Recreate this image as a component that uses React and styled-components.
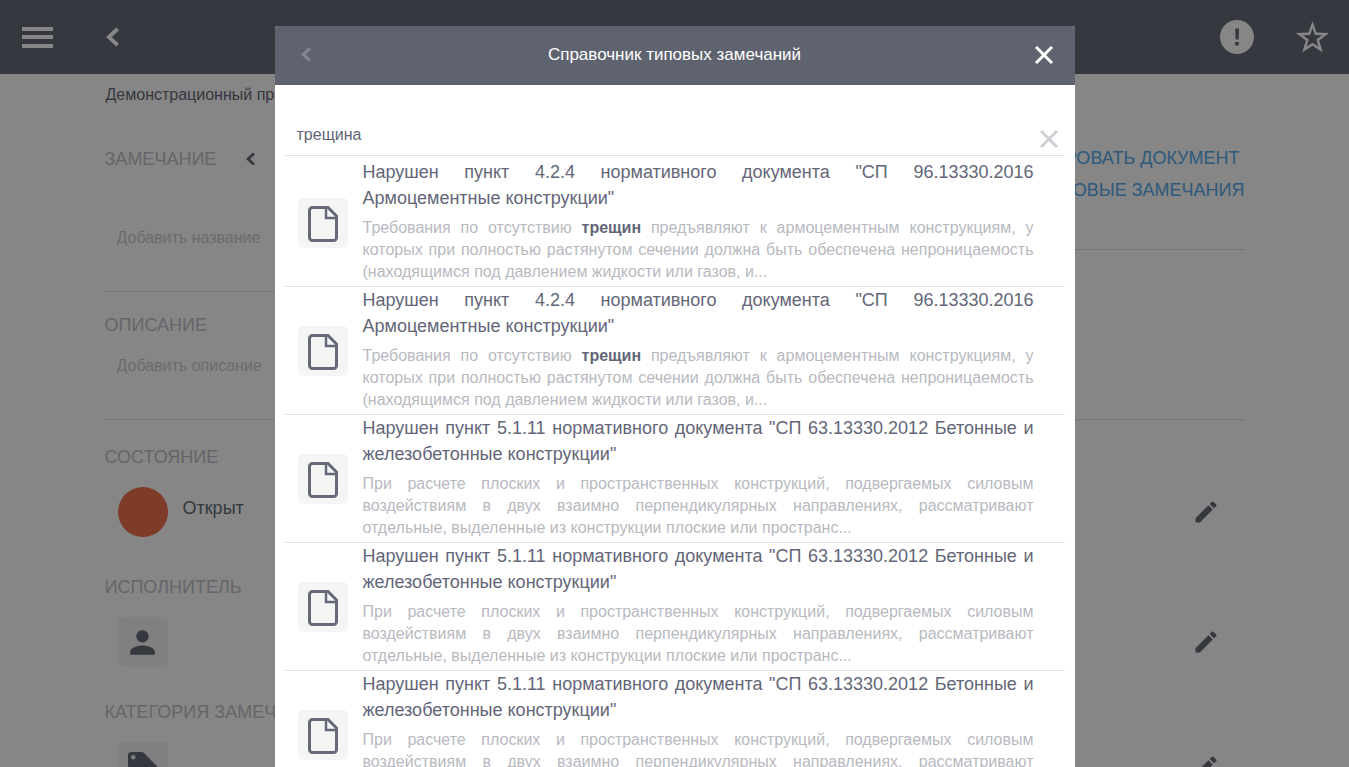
import React, { useState } from "react";
import styled, { createGlobalStyle } from "styled-components";
import { MdModeEdit, MdPerson, MdLocalOffer } from "react-icons/md";

const GlobalStyle = createGlobalStyle`
  *, *::before, *::after { box-sizing: border-box; }
  body {
    margin: 0;
    background: #f4f4f4;
    color: #616672;
    font-family: "Liberation Sans", Arial, sans-serif;
    font-size: 16px;
    line-height: 20px;
    overflow: hidden;
  }
  h1, h2, h3, p, ul { margin: 0; padding: 0; font-weight: 400; }
  button, input { font: inherit; color: inherit; border: 0; background: none; padding: 0; margin: 0; }
  button { cursor: pointer; }
  svg { display: block; }
`;

const Page = styled.div`
  height: 100vh;
  overflow: hidden;
`;

const AppBar = styled.header`
  display: flex;
  align-items: center;
  justify-content: space-between;
  height: 74px;
  padding: 0 18px;
  background: #616672;
  color: #f4f4f4;
`;

const BarGroup = styled.div`
  display: flex;
  align-items: center;
  gap: 37px;
`;

const IconButton = styled.button`
  display: grid;
  place-items: center;
  width: 38px;
  height: 38px;
  flex: none;
  &:disabled { color: #84878f; cursor: default; }
`;

const Container = styled.main`
  max-width: 1140px;
  margin: 0 auto;
  padding-top: 11px;
`;

const Breadcrumb = styled.p`
  padding-left: 1px;
  white-space: nowrap;
`;

const Columns = styled.div`
  display: grid;
  grid-template-columns: 1fr 1fr;
  align-items: start;
`;

const Panel = styled.section`
  border-bottom: 1px solid #d8d8d8;
  height: ${(p) => p.$height}px;
  padding-top: ${(p) => p.$top}px;
`;

const HeadingRow = styled.div`
  display: flex;
  align-items: center;
  gap: 24px;
`;

const Heading = styled.h2`
  font-size: 18px;
  line-height: 20px;
  color: #b8bac0;
  text-transform: uppercase;
`;

const SmallButton = styled.button`
  display: grid;
  place-items: center;
  width: ${(p) => p.$size}px;
  height: ${(p) => p.$size}px;
  flex: none;
`;

const Field = styled.input`
  display: block;
  width: 100%;
  height: 40px;
  padding: 0 12px;
  margin-top: ${(p) => p.$gap}px;
  outline: none;
  &::placeholder { color: #c3c4c8; opacity: 1; }
`;

const Actions = styled.nav`
  display: flex;
  flex-direction: column;
  align-items: flex-end;
  gap: 12px;
`;

const ActionLink = styled.a`
  font-size: 18px;
  line-height: 20px;
  color: #52a5e2;
  text-decoration: none;
  white-space: pre;
`;

const Property = styled.section`
  padding-bottom: ${(p) => p.$bottom}px;
`;

const PropertyRow = styled.div`
  display: flex;
  align-items: center;
  justify-content: space-between;
  padding: 0 25px 0 13px;
  margin-top: 20px;
`;

const PropertyValue = styled.div`
  display: flex;
  gap: 15px;
  font-size: 18px;
  line-height: 42px;
`;

const StatusDot = styled.span`
  width: 50px;
  height: 50px;
  border-radius: 50%;
  background: #e66d4a;
`;

const Tile = styled.span`
  display: grid;
  place-items: center;
  width: 50px;
  height: 50px;
  flex: none;
  border-radius: 5px;
  background: ${(p) => p.$tone || "#f5f5f5"};
`;

const Overlay = styled.div`
  position: fixed;
  inset: 0;
  display: flex;
  justify-content: center;
  align-items: flex-start;
  padding-top: 26px;
  overflow-y: auto;
  scrollbar-width: none;
  background: rgba(0, 0, 0, 0.45);
`;

const Dialog = styled.div`
  width: 100%;
  max-width: 800px;
  background: #fff;
  color: #636678;
  border-radius: 3px 3px 0 0;
  overflow: hidden;
`;

const DialogHeader = styled.header`
  display: flex;
  align-items: center;
  justify-content: space-between;
  height: 59px;
  padding: 0 12px 2px;
  background: #5f636f;
  color: #fff;
`;

const DialogTitle = styled.h1`
  font-size: 17px;
  line-height: 20px;
`;

const DialogBody = styled.div`
  padding: 29px 10px 10px;
`;

const SearchBar = styled.div`
  display: flex;
  align-items: center;
  margin-bottom: 3px;
  border-bottom: 1px solid #e2e2e4;
`;

const SearchInput = styled.input`
  flex: 1;
  min-width: 0;
  height: 41px;
  padding: 0 12px;
  outline: none;
`;

const ClearButton = styled.button`
  display: grid;
  place-items: end center;
  width: 32px;
  height: 26px;
  color: #cfd0d6;
`;

const List = styled.ul`
  list-style: none;
`;

const Item = styled.li`
  display: flex;
  align-items: center;
  gap: 15px;
  padding: 0 31px 0 13px;
  border-bottom: 1px solid #e2e2e4;
  text-align: justify;
`;

const ItemTitle = styled.h3`
  font-size: 18px;
  line-height: 26px;
`;

const ItemText = styled.p`
  padding: 6px 0 3px;
  line-height: 22px;
  color: #b8b9c0;
  b { color: #636678; }
`;

const Chevron = ({ width, height }) => (
  <svg width={width} height={height} viewBox="0 0 13 19" fill="currentColor" aria-hidden="true">
    <path d="M13 2.800 10.200 0 0 9.500 10.200 19 13 16.200 5.800 9.500z" />
  </svg>
);

const Cross = ({ size, stroke }) => (
  <svg width={size} height={size} viewBox="0 0 18 18" stroke="currentColor" strokeWidth={stroke} aria-hidden="true">
    <path d="M1 1l16 16M17 1L1 17" />
  </svg>
);

const MenuIcon = () => (
  <svg width="31" height="21" viewBox="0 0 31 21" fill="currentColor" aria-hidden="true">
    <path d="M0 0h31v4H0zM0 8h31v4H0zM0 17h31v4H0z" />
  </svg>
);

const AlertIcon = () => (
  <svg width="34" height="34" viewBox="0 0 34 34" aria-hidden="true">
    <circle cx="17" cy="17" r="17" fill="currentColor" />
    <path d="M15.200 8.500h3.800l-.4 11h-3zM15.200 22h3.600v3.500h-3.600z" fill="#616672" />
  </svg>
);

const StarIcon = () => (
  <svg width="33" height="32" viewBox="0 0 33 32" fill="currentColor" fillRule="evenodd" aria-hidden="true">
    <path d="M16.500 0 20.500 11.500 33 12 23.200 19.600 26.800 31.500 16.500 24.800 6.200 31.500 9.800 19.600 0 12 12.500 11.500zM16.500 7 14.200 13.900 7 14.200 12.700 18.600 10.700 25.600 16.500 21.700 22.300 25.600 20.300 18.600 26 14.200 18.800 13.900z" />
  </svg>
);

const FileIcon = () => (
  <svg width="30" height="38" viewBox="0 -2 30 38" fill="none" stroke="#656979" aria-hidden="true">
    <path d="M4.500 1.500H20l8.500 8.500v21.500a3 3 0 0 1-3 3h-21a3 3 0 0 1-3-3v-27a3 3 0 0 1 3-3z" strokeWidth="3" />
    <path d="M18 1.500V12H28.500" strokeWidth="2.500" />
  </svg>
);

const cement = {
  title: 'Нарушен пункт 4.2.4 нормативного документа "СП 96.13330.2016 Армоцементные конструкции"',
  text: (
    <>
      Требования по отсутствию <b>трещин</b> предъявляют к армоцементным конструкциям, у которых при полностью
      растянутом сечении должна быть обеспечена непроницаемость (находящимся под давлением жидкости или газов, и...
    </>
  ),
};

const concrete = {
  title: 'Нарушен пункт 5.1.11 нормативного документа "СП 63.13330.2012 Бетонные и железобетонные конструкции"',
  text: "При расчете плоских и пространственных конструкций, подвергаемых силовым воздействиям в двух взаимно перпендикулярных направлениях, рассматривают отдельные, выделенные из конструкции плоские или пространс...",
};

const results = [cement, cement, concrete, concrete, concrete];

function PropertyBlock({ title, bottom, children }) {
  return (
    <Property $bottom={bottom}>
      <Heading>{title}</Heading>
      <PropertyRow>
        <PropertyValue>{children}</PropertyValue>
        <SmallButton $size={28} aria-label={"Изменить: " + title}>
          <MdModeEdit size={28} />
        </SmallButton>
      </PropertyRow>
    </Property>
  );
}

export default function App() {
  const [query, setQuery] = useState("трещина");
  return (
    <>
      <GlobalStyle />
      <Page>
        <AppBar>
          <BarGroup>
            <IconButton aria-label="Меню"><MenuIcon /></IconButton>
            <IconButton aria-label="Назад"><Chevron width={13} height={20} /></IconButton>
          </BarGroup>
          <BarGroup>
            <IconButton aria-label="Уведомления"><AlertIcon /></IconButton>
            <IconButton aria-label="Избранное"><StarIcon /></IconButton>
          </BarGroup>
        </AppBar>
        <Container>
          <Breadcrumb>Демонстрационный проект</Breadcrumb>
          <Columns>
            <Panel $height={187} $top={44}>
              <HeadingRow>
                <Heading>Замечание</Heading>
                <SmallButton $size={20} aria-label="Предыдущее"><Chevron width={9} height={14} /></SmallButton>
              </HeadingRow>
              <Field $gap={49} aria-label="Название" placeholder="Добавить название" />
            </Panel>
            <Panel $height={145} $top={43}>
              <Actions>
                <ActionLink href="#document">{"СФОРМИРОВАТЬ ДОКУМЕНТ "}</ActionLink>
                <ActionLink href="#typical">ТИПОВЫЕ ЗАМЕЧАНИЯ</ActionLink>
              </Actions>
            </Panel>
          </Columns>
          <Panel $height={128} $top={23}>
            <Heading>Описание</Heading>
            <Field $gap={11} aria-label="Описание" placeholder="Добавить описание" />
          </Panel>
          <Panel as="div" $height={400} $top={27}>
            <PropertyBlock title="Состояние" bottom={40}>
              <StatusDot />
              Открыт
            </PropertyBlock>
            <PropertyBlock title="Исполнитель" bottom={35}>
              <Tile $tone="#e9e9e9"><MdPerson size={37} /></Tile>
            </PropertyBlock>
            <PropertyBlock title="Категория замечания" bottom={35}>
              <Tile $tone="#e9e9e9"><MdLocalOffer size={36} /></Tile>
            </PropertyBlock>
          </Panel>
        </Container>
      </Page>
      <Overlay>
        <Dialog role="dialog" aria-modal="true" aria-labelledby="dialog-title">
          <DialogHeader>
            <IconButton aria-label="Назад" disabled><Chevron width={10} height={15} /></IconButton>
            <DialogTitle id="dialog-title">Справочник типовых замечаний</DialogTitle>
            <IconButton aria-label="Закрыть"><Cross size={18} stroke={3} /></IconButton>
          </DialogHeader>
          <DialogBody>
            <SearchBar>
              <SearchInput aria-label="Поиск" value={query} onChange={(e) => setQuery(e.target.value)} />
              <ClearButton aria-label="Очистить" onClick={() => setQuery("")}><Cross size={18} stroke={3} /></ClearButton>
            </SearchBar>
            <List>
              {results.map((item, i) => (
                <Item key={i}>
                  <Tile><FileIcon /></Tile>
                  <div>
                    <ItemTitle>{item.title}</ItemTitle>
                    <ItemText>{item.text}</ItemText>
                  </div>
                </Item>
              ))}
            </List>
          </DialogBody>
        </Dialog>
      </Overlay>
    </>
  );
}
